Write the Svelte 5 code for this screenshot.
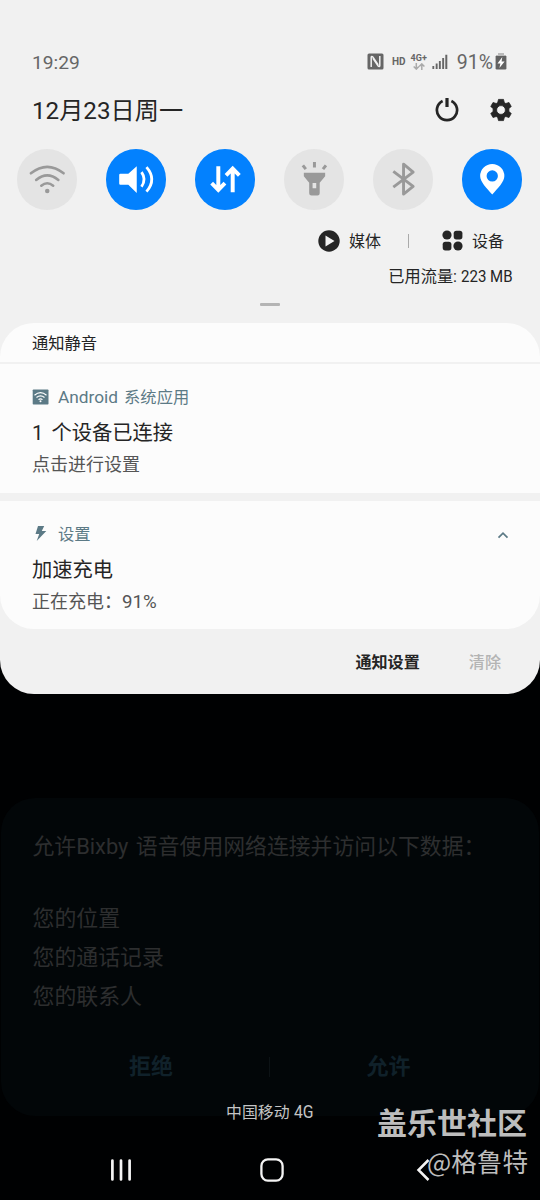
<script>
  const tiles = [
    { id: 'wifi', on: false },
    { id: 'sound', on: true },
    { id: 'data', on: true },
    { id: 'torch', on: false },
    { id: 'bluetooth', on: false },
    { id: 'location', on: true }
  ];
  const permissions = ['您的位置', '您的通话记录', '您的联系人'];
</script>

<main class="screen">
  <section class="panel">
    <div class="status">
      <span class="time">19:29</span>
      <div class="indicators">
        <svg class="nfc" width="17" height="17" viewBox="0 0 17 17">
          <rect x=".5" y=".5" width="16" height="16" rx="1.500" fill="#666" />
          <path d="M4.200 14V4.500c0-1.300.9-1.400 1.600-.6l5.400 8M12.800 3v9.500c0 1.300-.9 1.400-1.600.6l-5.400-8" fill="none" stroke="#f1f1f1" stroke-width="1.500" />
        </svg>
        <span class="hd">HD</span>
        <span class="net">
          <b>4G+</b>
          <svg width="12" height="7" viewBox="0 0 12 7" fill="none" stroke="#aaa" stroke-width="1.500">
            <path d="M3.300 0v6M.7 3.500l2.600 2.600 2.600-2.600M8.800 7V1M6.200 3.500L8.800.9l2.600 2.600" />
          </svg>
        </span>
        <svg class="signal" width="16" height="15" viewBox="0 0 16 15" fill="#666">
          <path d="M.4 12h1.800v3H.4zM3.700 9.500h1.900V15H3.700zM6.900 7h1.900v8H6.900zM10.200 4h1.900v11h-1.900zM13.300.7h2V15h-2z" />
        </svg>
        <span class="percent">91%</span>
        <svg class="battery" width="12" height="17" viewBox="0 0 12 17">
          <path d="M3 0h6v2h2v2H1V2h2z" fill="#bbb" />
          <path d="M.6 3h10.800v12.300q0 1.200-1.200 1.200H1.800Q.6 16.500.6 15.300z" fill="#626262" />
          <path d="M7.300 4L2.500 10.500H5.400L4.400 15L9.600 8.500H6.600z" fill="#fff" />
        </svg>
      </div>
    </div>

    <header class="top">
      <h1>12月23日周一</h1>
      <div class="actions">
        <svg width="24" height="24" viewBox="0 0 24 24" fill="none" stroke="#252525" stroke-width="2.700">
          <path d="M7.600 3a10.100 10.100 0 1 0 8.800 0" />
          <path d="M12 0v9" stroke-width="3.200" />
        </svg>
        <svg width="24" height="24" viewBox="0 0 24 24">
          <path fill="#252525" stroke="#252525" stroke-width=".8" stroke-linejoin="round" fill-rule="evenodd" d="M9.500 1.400h5l.8 3.200 1.500.9 3.200-1 2.200 3.900-2.300 2.300v2.600l2.300 2.300-2.200 3.900-3.200-1-1.500.9-.8 3.200h-5l-.8-3.200-1.500-.9-3.200 1-2.200-3.900 2.300-2.300v-2.600L1.800 8.400 4 4.500l3.200 1 1.500-.9zM12 7.600a4.400 4.400 0 1 0 0 8.800 4.400 4.400 0 0 0 0-8.800z" />
        </svg>
      </div>
    </header>

    <div class="tiles">
      {#each tiles as tile (tile.id)}
        <div class="tile" class:on={tile.on}>
          <svg width="60.500" height="60.500" viewBox="0 0 61 61" fill="none" stroke="currentColor">
            {#if tile.id === 'wifi'}
              <path d="M14 24.500Q30.500 11.500 47 24.500M19.300 31.200Q30.500 22 41.700 31.200M24.500 37Q30.500 32 36.500 37" stroke-width="2.600" stroke-linecap="round" />
              <circle cx="30.500" cy="42.300" r="2.300" fill="currentColor" stroke="none" />
            {:else if tile.id === 'sound'}
              <path d="M14.500 25h8l8.500-7.600v27L22.500 36h-8q-1.200 0-1.200-1.200v-8.600q0-1.200 1.200-1.200z" fill="currentColor" stroke="none" />
              <path d="M35.800 23.300Q41 30.500 35.800 38M40.800 18.200Q51.500 30.500 40.800 43" stroke-width="2.800" />
            {:else if tile.id === 'data'}
              <path d="M23.500 17.500V41M16.800 34.500l6.700 6.700 6.700-6.700M38 43.500V20M31.300 26.500l6.700-6.700 6.700 6.700" stroke-width="4" />
            {:else if tile.id === 'torch'}
              <path fill="currentColor" stroke="none" fill-rule="evenodd" d="M20 24h21.500v3.500L36 34v10.500q0 2.300-2.300 2.300h-6q-2.300 0-2.300-2.300V34L20 27.500zM28.800 34.200v5.500h3.700v-5.500z" />
              <path d="M30.700 13v5.600M19 16.500l3 3.800M42.300 16.500l-3 3.800" stroke-width="3" />
            {:else if tile.id === 'bluetooth'}
              <path d="M20.500 22.500L40.500 37.700 30.800 45.400V15.300L40.500 23.300 20.500 38.500" stroke-width="2.900" stroke-linejoin="round" />
            {:else}
              <path fill="currentColor" stroke="none" fill-rule="evenodd" d="M30.500 46C25 39.500 18.300 33.500 18.300 27.300a12.200 12.200 0 0 1 24.400 0C42.700 33.500 36 39.500 30.500 46zM30.500 21.400a5.700 5.700 0 1 0 0 11.400 5.700 5.700 0 0 0 0-11.400z" />
            {/if}
          </svg>
        </div>
      {/each}
    </div>

    <div class="shortcuts">
      <svg width="22" height="22" viewBox="0 0 22 22"><circle cx="11" cy="11" r="10.700" fill="#252525" /><path d="M7.500 5.500v11L16.500 11z" fill="#f1f1f1" /></svg>
      <span>媒体</span>
      <i class="bar"></i>
      <svg width="21" height="21" viewBox="0 0 21 21" fill="#252525">
        <circle cx="5" cy="5" r="4.600" /><rect x="11.700" y=".7" width="8.700" height="8.700" rx="2.600" />
        <rect x=".7" y="11.700" width="8.700" height="8.700" rx="2.600" /><circle cx="16" cy="16" r="4.600" />
      </svg>
      <span>设备</span>
    </div>
    <div class="usage">已用流量:<span class="narrow">223 MB</span></div>
    <div class="handle"><i></i></div>

    <div class="cards">
      <div class="silent">通知静音</div>
      <article class="card first">
        <div class="source">
          <svg width="17" height="16" viewBox="0 0 17 16">
            <rect x=".7" y=".5" width="15.800" height="15" rx=".8" fill="#5c7a86" />
            <path d="M2.500 6.200q6-5 12 0M4.500 8.500q4-3.200 8 0M6.500 10.600q2-1.600 4 0" fill="none" stroke="#fff" stroke-width="1.200" />
            <circle cx="8.500" cy="12.300" r="1" fill="#fff" />
          </svg>
          <span><span class="latin">Android</span>系统应用</span>
        </div>
        <h2 class="spaced">1 个设备已连接</h2>
        <p>点击进行设置</p>
      </article>
      <article class="card second">
        <div class="source">
          <svg width="17" height="16" viewBox="0 0 17 16"><path d="M6 0h6.200L9.800 5h4.500L4.700 15 7.200 8.100H3.500z" fill="#5c7a86" /></svg>
          <span>设置</span>
          <svg class="chevron" width="12" height="8" viewBox="0 0 12 8"><path d="M1.500 6.700L6 2.200l4.500 4.500" fill="none" stroke="#5c7a86" stroke-width="1.700" /></svg>
        </div>
        <h2>加速充电</h2>
        <p>正在充电：<span class="value">91%</span></p>
      </article>
    </div>

    <footer class="foot">
      <span class="manage">通知设置</span>
      <span class="clear">清除</span>
    </footer>
  </section>

  <section class="dialog">
    <p class="ask">允许Bixby 语音使用网络连接并访问以下数据：</p>
    <div class="list">
      {#each permissions as item}
        <p>{item}</p>
      {/each}
    </div>
    <div class="choices">
      <span>拒绝</span>
      <i></i>
      <span>允许</span>
    </div>
  </section>

  <nav class="nav">
    <svg width="24" height="24" viewBox="0 0 24 24" fill="none" stroke="#f4f4f4" stroke-width="2.700" stroke-linecap="round"><path d="M3.400 2.600v18.800M12 2.600v18.800M20.600 2.600v18.800" /></svg>
    <svg width="24" height="24" viewBox="0 0 24 24" fill="none" stroke="#f4f4f4" stroke-width="2.300"><rect x="1.400" y="1.400" width="21.200" height="21.200" rx="6.500" /></svg>
    <svg width="24" height="24" viewBox="0 0 24 24" fill="none" stroke="#f4f4f4" stroke-width="2.500"><path d="M17.500 2L7.500 12l10 10" /></svg>
  </nav>

  <div class="carrier">中国移动<span class="narrow">4G</span></div>
  <div class="mark">
    <strong>盖乐世社区</strong>
    <span>@格鲁特</span>
  </div>
</main>

<style>
  :global(body) { margin: 0; background: #000; }
  .screen {
    position: relative;
    width: 540px;
    height: 1200px;
    overflow: hidden;
    background: #000102;
    font-family: Roboto, "Noto Sans CJK SC", sans-serif;
    color: #252525;
  }
  svg { display: block; flex: none; }
  h1, h2, p { margin: 0; font-weight: 400; }
  span, h1, h2, p { white-space: nowrap; }
  .panel {
    box-sizing: border-box;
    height: 694px;
    padding-top: 46px;
    background: #f1f1f1;
    border-radius: 0 0 34px 34px;
  }
  .status {
    display: flex;
    justify-content: space-between;
    align-items: center;
    height: 32px;
    padding: 0 33px 0 32px;
    color: #666;
  }
  .time { font-size: 19.200px; }
  .indicators { display: flex; align-items: center; }
  .nfc { margin: -2px 1px 0 0; }
  .hd { margin-left: 7px; font-size: 10px; font-weight: 700; line-height: 12px; }
  .net { display: flex; flex-direction: column; align-items: center; margin-left: 5px; }
  .net b { font-size: 9px; line-height: 9px; }
  .signal { margin: -2px 0 0 5px; }
  .percent { margin-left: 9px; font-size: 19.500px; }
  .battery { margin: -2px 0 0 2px; }
  .top {
    display: flex;
    justify-content: space-between;
    align-items: center;
    height: 64px;
    padding: 0 27px 0 32px;
  }
  h1 { padding-top: 2px; font-size: 24.200px; line-height: 36px; }
  .actions { display: flex; gap: 30px; }
  .tiles { display: flex; gap: 28.500px; padding: 7px 0 0 16.800px; }
  .tile { width: 60.500px; height: 60.500px; border-radius: 50%; background: #e4e4e4; color: #999; }
  .tile.on { background: #0381fe; color: #fff; }
  .shortcuts {
    display: flex;
    align-items: center;
    height: 30px;
    margin-top: 16.500px;
    padding-left: 318px;
    font-size: 16px;
  }
  .shortcuts svg { margin-top: -1px; }
  .shortcuts span { margin-left: 9px; padding-top: 2px; line-height: 24px; }
  .bar { width: 1px; height: 14px; margin: 0 33px 0 27px; background: #aaa; }
  .usage {
    display: flex;
    justify-content: flex-end;
    margin-top: 9px;
    padding-right: 27px;
    font-size: 16.200px;
    line-height: 24px;
  }
  .usage .narrow { width: 52px; margin-left: 4px; }
  .narrow { display: block; font-size: 17.300px; transform: scaleX(.87); transform-origin: 0 50%; }
  .usage .narrow, .carrier .narrow { line-height: 22px; }
  .handle { display: flex; justify-content: center; padding-top: 14px; }
  .handle i { width: 20px; height: 3px; border-radius: 1px; background: #b4b4b4; }
  .cards { margin-top: 17px; border-radius: 34px; overflow: hidden; }
  .silent {
    height: 39px;
    padding-left: 32px;
    border-bottom: 2px solid #f1f1f1;
    background: #fcfcfc;
    font-size: 16.300px;
    line-height: 42px;
  }
  .card { box-sizing: border-box; padding: 21px 31px 0 32px; background: #fcfcfc; }
  .first { height: 129px; }
  .second { height: 128px; margin-top: 8px; }
  .source { display: flex; align-items: center; height: 24px; color: #5c7a86; font-size: 16.300px; }
  .source svg { margin-top: -1px; }
  .source > span { margin-left: 9px; padding-top: 2px; line-height: 24px; }
  .latin { margin-right: 6px; font-size: 17.300px; line-height: 20px; }
  .source .chevron { margin: 2px 0 0 auto; }
  h2 { margin-top: 9px; font-size: 20.300px; line-height: 30px; }
  .spaced { word-spacing: 3px; }
  p { font-size: 18px; line-height: 28px; }
  .card p { margin-top: 3px; color: #555; }
  .value { font-size: 18.700px; line-height: 20px; }
  .foot {
    box-sizing: border-box;
    display: flex;
    justify-content: flex-end;
    align-items: center;
    gap: 49px;
    height: 66px;
    padding: 2px 39px 0 0;
    font-size: 16.100px;
    line-height: 24px;
  }
  .manage { font-weight: 700; }
  .clear { font-weight: 500; color: #b4b4b4; }
  .dialog {
    box-sizing: border-box;
    height: 318px;
    margin: 104px 1px 0;
    padding: 29px 0 0 31.500px;
    border-radius: 34px;
    background: #020608;
    color: #2d2e2f;
  }
  .dialog p { font-size: 21.900px; line-height: 39px; }
  .dialog .ask { word-spacing: 2px; font-size: 21.850px; }
  .list { margin-top: 33px; }
  .choices { display: flex; align-items: center; height: 40px; margin-top: 31px; color: #10212a; font-size: 22px; font-weight: 700; }
  .choices span { line-height: 32px; margin-left: 96.500px; }
  .choices i { width: 1px; height: 20px; margin-left: 96px; background: #0c1215; }
  .nav { display: flex; justify-content: space-between; width: 326px; margin: 42px 0 0 109px; }
  .carrier {
    position: absolute;
    left: 226px;
    top: 1101px;
    display: flex;
    gap: 4px;
    color: #c4c4c4;
    font-size: 15.900px;
    line-height: 24px;
  }
  .carrier .narrow { font-size: 17.500px; transform: scaleX(.9); }
  .mark {
    position: absolute;
    right: 12px;
    top: 1101px;
    display: flex;
    flex-direction: column;
    align-items: flex-end;
    color: #bdbdbd;
    font-family: "Noto Sans CJK SC", sans-serif;
  }
  .mark strong { margin-right: 1px; font-size: 30px; line-height: 40px; font-weight: 700; }
  .mark span { padding-top: 1px; font-size: 25.600px; line-height: 38px; }
</style>
